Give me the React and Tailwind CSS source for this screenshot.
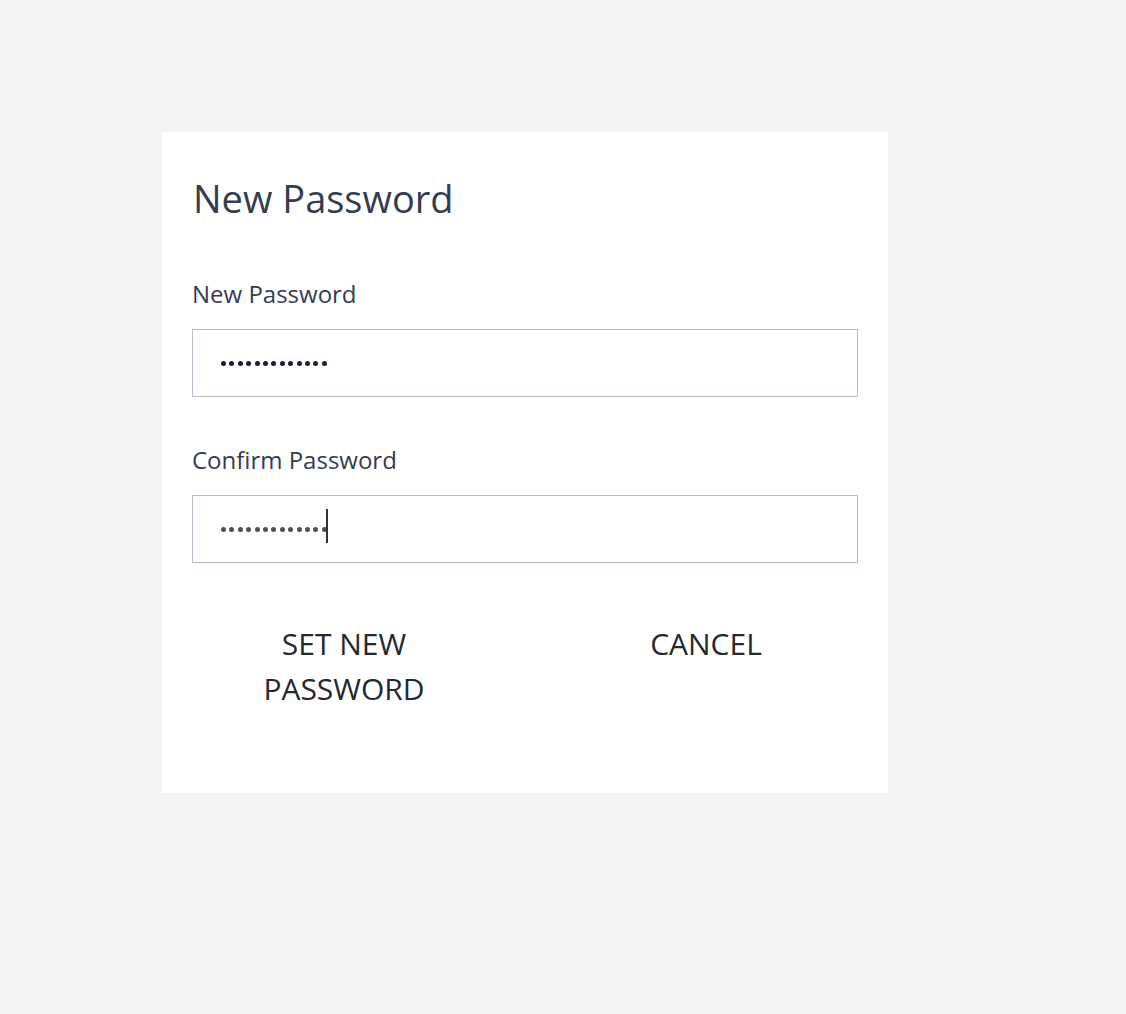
const font = { fontFamily: '"Open Sans", "Noto Sans", sans-serif' };

function Dots({ color }) {
  return (
    <div className="flex items-center gap-[3.4px]">
      {Array.from({ length: 13 }).map((_, i) => (
        <span key={i} className={`block w-[5px] h-[5px] rounded-full ${color}`} />
      ))}
    </div>
  );
}

function Field({ label, dotColor, caret, labelGap }) {
  return (
    <div>
      <label className={`block text-[24px] leading-[32px] text-[#333d4f] ${labelGap}`}>{label}</label>
      <div className="h-[68px] border border-[#babad6] pl-[28px] flex items-center">
        <Dots color={dotColor} />
        {caret && <span className="block w-[2px] h-[34px] bg-[#333] ml-[-1px] -mt-[6px]" />}
      </div>
    </div>
  );
}

export default function App() {
  return (
    <div className="min-h-[1014px] bg-[#f3f3f3] pt-[132px] pl-[162px]" style={font}>
      <div className="w-[726px] h-[661px] bg-white px-[30px] pt-[40px]">
        <h1 className="text-[38px] leading-[52px] text-[#333d4f] pl-[1px]">New Password</h1>
        <div className="mt-[54px]">
          <Field label="New Password" dotColor="bg-[#1b1848]" labelGap="mb-[19px]" />
        </div>
        <div className="mt-[47px]">
          <Field label="Confirm Password" dotColor="bg-[#4b4f58]" labelGap="mb-[19px]" caret />
        </div>
        <div className="flex justify-between px-[52px] mt-[58px]">
          <button className="w-[200px] text-[30px] leading-[45px] text-[#25282d] text-center">SET NEW PASSWORD</button>
          <button className="w-[200px] text-[30px] leading-[45px] text-[#25282d] text-center self-start">CANCEL</button>
        </div>
      </div>
    </div>
  );
}
